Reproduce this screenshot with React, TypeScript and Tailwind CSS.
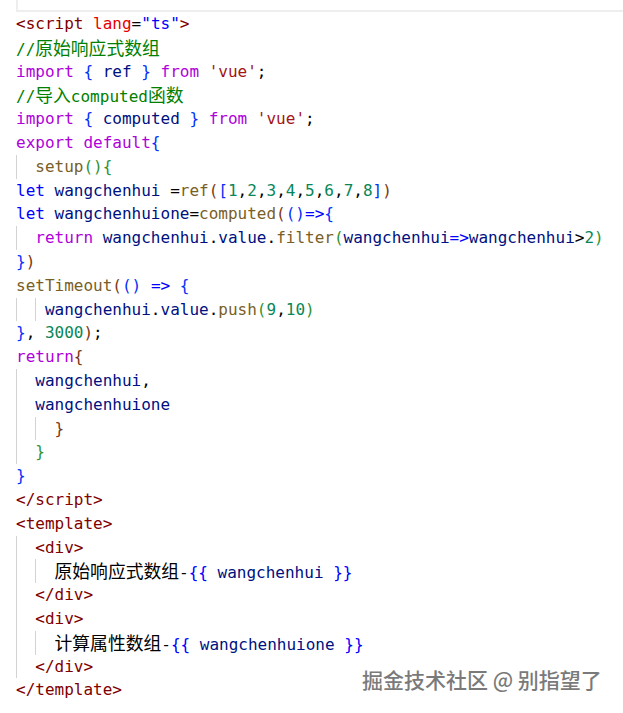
import React from "react";

type Tok = [string, string];
type Line = { indent?: number[]; toks: Tok[] };

const col: Record<string, string> = {
  tag: "text-[#800000]",
  attr: "text-[#e50000]",
  val: "text-[#0000ff]",
  cmt: "text-[#008000]",
  kw: "text-[#af00db]",
  v: "text-[#001080]",
  str: "text-[#a31515]",
  fn: "text-[#795e26]",
  num: "text-[#098658]",
  blue: "text-[#0000ff]",
  b1: "text-[#0431fa]",
  b2: "text-[#319331]",
  b3: "text-[#7b3814]",
  txt: "text-black",
};

const nums = (a: number[]): Tok[] =>
  a.flatMap((n, i) => (i === 0 ? [["num", String(n)] as Tok] : [["txt", ","] as Tok, ["num", String(n)] as Tok]));

const lines: Line[] = [
  { toks: [["tag", "<script"], ["attr", " lang"], ["txt", "="], ["val", '"ts"'], ["tag", ">"]] },
  { toks: [["cmt", "//原始响应式数组"]] },
  { toks: [["kw", "import"], ["txt", " "], ["b1", "{"], ["v", " ref "], ["b1", "}"], ["kw", " from "], ["str", "'vue'"], ["txt", ";"]] },
  { toks: [["cmt", "//导入computed函数"]] },
  { toks: [["kw", "import"], ["txt", " "], ["b1", "{"], ["v", " computed "], ["b1", "}"], ["kw", " from "], ["str", "'vue'"], ["txt", ";"]] },
  { toks: [["kw", "export default"], ["b1", "{"]] },
  { indent: [2], toks: [["fn", "setup"], ["b2", "()"], ["b2", "{"]] },
  {
    toks: [
      ["blue", "let "],
      ["v", "wangchenhui "],
      ["txt", "="],
      ["fn", "ref"],
      ["b3", "("],
      ["b1", "["],
      ...nums([1, 2, 3, 4, 5, 6, 7, 8]),
      ["b1", "]"],
      ["b3", ")"],
    ],
  },
  { toks: [["blue", "let "], ["v", "wangchenhuione"], ["txt", "="], ["fn", "computed"], ["b3", "("], ["b1", "()"], ["blue", "=>"], ["b1", "{"]] },
  {
    indent: [2],
    toks: [
      ["kw", "return "],
      ["v", "wangchenhui"],
      ["txt", "."],
      ["v", "value"],
      ["txt", "."],
      ["fn", "filter"],
      ["b2", "("],
      ["v", "wangchenhui"],
      ["blue", "=>"],
      ["v", "wangchenhui"],
      ["txt", ">"],
      ["num", "2"],
      ["b2", ")"],
    ],
  },
  { toks: [["b1", "}"], ["b3", ")"]] },
  { toks: [["fn", "setTimeout"], ["b3", "("], ["b1", "()"], ["txt", " "], ["blue", "=>"], ["txt", " "], ["b1", "{"]] },
  {
    indent: [2, 1],
    toks: [["v", "wangchenhui"], ["txt", "."], ["v", "value"], ["txt", "."], ["fn", "push"], ["b2", "("], ...nums([9, 10]), ["b2", ")"]],
  },
  { toks: [["b1", "}"], ["txt", ", "], ["num", "3000"], ["b3", ")"], ["txt", ";"]] },
  { toks: [["kw", "return"], ["b3", "{"]] },
  { indent: [2], toks: [["v", "wangchenhui"], ["txt", ","]] },
  { indent: [2], toks: [["v", "wangchenhuione"]] },
  { indent: [2, 2], toks: [["b3", "}"]] },
  { indent: [2], toks: [["b2", "}"]] },
  { toks: [["b1", "}"]] },
  { toks: [["tag", "</script>"]] },
  { toks: [["tag", "<template>"]] },
  { indent: [2], toks: [["tag", "<div>"]] },
  { indent: [2, 2], toks: [["txt", "原始响应式数组-"], ["blue", "{{"], ["v", " wangchenhui "], ["blue", "}}"]] },
  { indent: [2], toks: [["tag", "</div>"]] },
  { indent: [2], toks: [["tag", "<div>"]] },
  { indent: [2, 2], toks: [["txt", "计算属性数组-"], ["blue", "{{"], ["v", " wangchenhuione "], ["blue", "}}"]] },
  { indent: [2], toks: [["tag", "</div>"]] },
  { toks: [["tag", "</template>"]] },
];

function Run({ text }: { text: string }) {
  const parts = text.split(/([\u4e00-\u9fff]+)/);
  return (
    <>
      {parts.map((p, i) =>
        /[\u4e00-\u9fff]/.test(p) ? (
          <span key={i} className="text-[17.8px] font-['Noto_Sans_CJK_SC',sans-serif]">
            {p}
          </span>
        ) : (
          p
        )
      )}
    </>
  );
}

export default function App() {
  return (
    <div className="relative w-[623px] h-[713px] bg-white overflow-hidden font-['DejaVu_Sans_Mono','Noto_Sans_CJK_SC',monospace] text-[16px]">
      {/* previous line highlight, cut off at the top */}
      <div className="ml-4 h-[12px] border-l-2 border-b-2 border-[#eeeeee]" />

      <div className="flex flex-col pl-4">
        {lines.map((ln, i) => (
          <div key={i} className="flex items-stretch h-[23.8px]">
            {(ln.indent ?? []).map((w, j) => (
              <span
                key={j}
                className={`shrink-0 border-l border-[#d3d3d3] ${w === 2 ? "w-[2ch]" : "w-[1ch]"}`}
              />
            ))}
            <span className="whitespace-pre leading-[23.8px]">
              {ln.toks.map(([c, s], k) => (
                <span key={k} className={col[c]}>
                  <Run text={s} />
                </span>
              ))}
            </span>
          </div>
        ))}
      </div>

      {/* site watermark */}
      <div className="absolute left-[362px] top-[669px] text-[21px] leading-none font-medium text-[#7a7a7a] font-['Noto_Sans_CJK_SC',sans-serif] [text-shadow:1px_1px_1px_rgba(255,255,255,0.9),-1px_-1px_1px_rgba(255,255,255,0.9)] whitespace-nowrap">
        掘金技术社区 @ 别指望了
      </div>
    </div>
  );
}
